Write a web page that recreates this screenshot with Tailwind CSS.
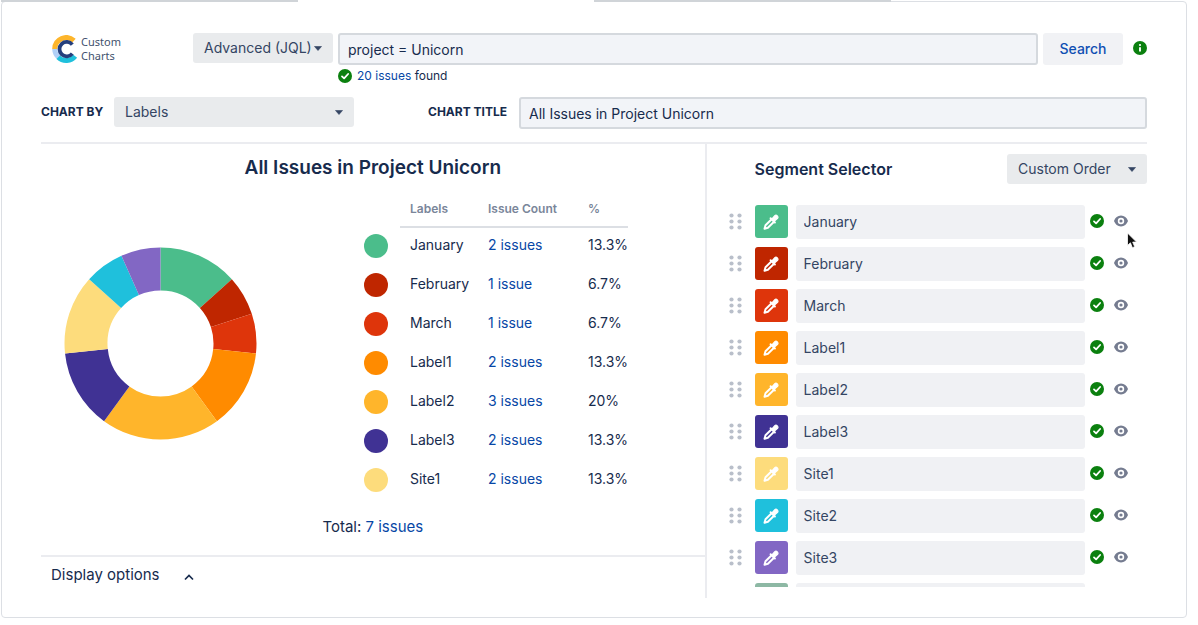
<!DOCTYPE html>
<html lang="en">
<head>
<meta charset="utf-8">
<title>Custom Charts</title>
<script src="https://cdn.jsdelivr.net/npm/@tailwindcss/browser@4"></script>
</head>
<body class="bg-white font-['Inter','Liberation_Sans',sans-serif] text-sm text-[#172b4d]">

<svg class="hidden" aria-hidden="true">
  <symbol id="check" viewBox="0 0 14 14"><circle cx="7" cy="7" r="7" fill="#0b800f"/><path d="M4 7.4 6.1 9.4 10.1 5" fill="none" stroke="#fff" stroke-width="1.8" stroke-linecap="round" stroke-linejoin="round"/></symbol>
  <symbol id="eye" viewBox="0 0 14 12"><path d="M7 .5C3.600.5 1.200 2.800.2 5.400a1.500 1.500 0 0 0 0 1.200C1.200 9.200 3.600 11.500 7 11.500S12.800 9.200 13.800 6.600a1.500 1.500 0 0 0 0-1.200C12.800 2.800 10.400.5 7 .5Z" fill="#757c90"/><circle cx="7" cy="6" r="2.400" fill="none" stroke="#fff" stroke-width="1.600"/></symbol>
  <symbol id="grip" viewBox="0 0 13 17"><g fill="#b9bfca"><circle cx="2.500" cy="2.500" r="2.100"/><circle cx="10.500" cy="2.500" r="2.100"/><circle cx="2.500" cy="8.500" r="2.100"/><circle cx="10.500" cy="8.500" r="2.100"/><circle cx="2.500" cy="14.500" r="2.100"/><circle cx="10.500" cy="14.500" r="2.100"/></g></symbol>
  <symbol id="dropper" viewBox="0 0 16 16"><path d="M8.600 5.200 2.500 11.300 1.500 14.700 4.900 13.800 11 7.700" fill="none" stroke="#fff" stroke-width="2" stroke-linecap="round" stroke-linejoin="round"/><path d="M7.600 4.200 11.900 8.500" stroke="#fff" stroke-width="2" stroke-linecap="round"/><path d="M9 5 11.600 1.800a1.900 1.900 0 0 1 2.700 2.700L11.200 7.200Z" fill="#fff" stroke="#fff" stroke-width="1.200" stroke-linejoin="round"/></symbol>
  <symbol id="caret" viewBox="0 0 8 5"><path d="M.5.500h7L4 4.500Z" fill="#344563" stroke="#344563" stroke-width=".6" stroke-linejoin="round"/></symbol>
</svg>

<main class="relative mt-px mr-[11px] ml-px rounded-[4px] border border-[#dcdfe4] pt-[31px] pr-[39px] pb-[19px] pl-[39px]">
  <div class="absolute -top-[2px] -left-px -right-px grid h-[3px] grid-cols-4" aria-hidden="true">
    <span class="mb-px bg-[#d0d4d8]"></span><span class="bg-white"></span><span class="mb-px bg-[#d0d4d8]"></span>
  </div>

  <header class="flex items-start">
    <div class="flex w-[152px] shrink-0 items-center gap-px pt-0.5 pl-[11px]">
      <svg class="size-7 shrink-0" viewBox="0 0 28 28" fill="none" aria-hidden="true">
        <path d="M2.700 14A11.500 11.500 0 0 1 22 5.700" stroke="#fdb52b" stroke-width="5"/>
        <path d="M2.700 14A11.500 11.500 0 0 0 6.700 22.400" stroke="#b1d0f7" stroke-width="5"/>
        <path d="M6.200 22.200A11.500 11.500 0 0 0 23.200 21.200" stroke="#1fc0dc" stroke-width="5"/>
        <path d="M20.300 9.600A7.200 7.200 0 1 0 20.300 18.600" stroke="#253f7d" stroke-width="3.800"/>
      </svg>
      <span class="font-['Noto_Sans','Open_Sans',sans-serif] text-[11px] leading-[14px] text-[#42526e]">Custom<br>Charts</span>
    </div>
    <button type="button" class="flex h-[30px] w-[140px] shrink-0 items-center justify-between rounded-[3px] bg-[#e9ebed] px-[11px] text-[#344563]">Advanced (JQL)<svg class="h-[5px] w-2" aria-hidden="true"><use href="#caret"/></svg></button>
    <div class="ml-[5px] min-w-0 flex-1">
      <input type="text" aria-label="JQL query" value="project = Unicorn" class="block h-8 w-full rounded-[3px] border-2 border-[#d5d9de] bg-[#f2f4f8] px-2">
      <p class="flex h-[22px] items-center gap-[5px] text-xs"><svg class="size-[14px]" aria-hidden="true"><use href="#check"/></svg><span><a href="#" class="text-[#0747a6]">20 issues</a> found</span></p>
    </div>
    <button type="button" class="ml-[5px] h-8 w-20 rounded-[3px] bg-[#f1f2f5] font-medium text-[#0f4fb3]">Search</button>
    <svg class="mt-2 ml-2.5 size-[14px]" viewBox="0 0 14 14" role="img" aria-label="Information"><circle cx="7" cy="7" r="7" fill="#0b800f"/><circle cx="7" cy="4" r="1.100" fill="#fff"/><path d="M7 6.300v4.200" stroke="#fff" stroke-width="1.900"/></svg>
  </header>

  <div class="mt-2.5 flex items-start">
    <span id="by" class="w-[73px] shrink-0 text-xs leading-[30px] font-bold">CHART BY</span>
    <button type="button" aria-labelledby="by" class="flex h-[30px] w-60 items-center justify-between rounded-[3px] bg-[#e9ebed] px-[11px] text-[#344563]">Labels<svg class="h-[5px] w-2" aria-hidden="true"><use href="#caret"/></svg></button>
    <label for="title" class="ml-[74px] w-[91px] shrink-0 text-xs leading-[30px] font-bold">CHART TITLE</label>
    <input id="title" type="text" value="All Issues in Project Unicorn" class="block h-8 min-w-0 flex-1 rounded-[3px] border-2 border-[#d5d9de] bg-[#f2f4f8] px-2">
  </div>

  <div class="mt-[13px] flex border-t-2 border-[#ebecf0]">
    <section class="w-[60%] pt-2.5">
      <h1 class="text-center text-[19px] leading-7 font-semibold">All Issues in Project Unicorn</h1>
      <div class="mt-[9px] flex items-start">
        <svg class="mt-[56px] ml-[23px] size-[193px] shrink-0" viewBox="0 0 193 193" role="img" aria-label="Issues by label">
          <g id="donut"></g>
        </svg>
        <table class="ml-[107px] text-left">
          <thead>
            <tr class="h-9 text-xs text-[#7a869a]">
              <td class="w-9"></td>
              <th class="w-[78px] border-b-2 border-[#dcdfe4] pl-2.5 font-semibold">Labels</th>
              <th class="w-[100px] border-b-2 border-[#dcdfe4] pl-2.5 font-semibold">Issue Count</th>
              <th class="w-[49px] border-b-2 border-[#dcdfe4] pl-2.5 font-semibold">%</th>
            </tr>
          </thead>
          <tbody id="legend"></tbody>
        </table>
      </div>
      <p class="mt-[13px] text-center text-[15px] leading-7">Total: <a href="#" class="text-[#0747a6]">7 issues</a></p>
      <div class="mt-3.5 border-t-2 border-[#ebecf0] pt-1.5 pl-2.5">
        <button type="button" aria-expanded="true" class="flex items-center gap-6 text-[15px] leading-6">Display options<svg class="mt-1 h-[7px] w-[10px]" viewBox="0 0 10 7" fill="none" aria-hidden="true"><path d="M1 5.500 5 1.500 9 5.500" stroke="#172b4d" stroke-width="1.700"/></svg></button>
      </div>
    </section>

    <section class="min-w-0 flex-1 border-l-2 border-[#ebecf0] pt-2.5 pb-[11px] pl-[22px]">
      <div class="flex items-center justify-between pl-[26px]">
        <h2 class="text-base font-semibold">Segment Selector</h2>
        <button type="button" class="flex h-[30px] w-[140px] items-center justify-between rounded-[3px] bg-[#e9ebed] px-[11px] text-[#344563]">Custom Order<svg class="h-[5px] w-2" aria-hidden="true"><use href="#caret"/></svg></button>
      </div>
      <ul id="segments" class="mt-[21px] flex h-[382px] flex-col gap-2 overflow-hidden pr-[19px]"></ul>
    </section>
  </div>

  <svg class="absolute top-[230px] right-[48px] h-[18px] w-3" viewBox="0 0 12 18" aria-hidden="true"><path d="M1.500 1v12.500l2.900-2.700 2 4.900 2.300-1-2-4.600h3.900Z" fill="#111" stroke="#fff" stroke-width=".8"/></svg>
</main>

<script>
  const segments = [
    ['January', '#4bbd8b', 2], ['February', '#bf2600', 1], ['March', '#de350b', 1],
    ['Label1', '#ff8b00', 2], ['Label2', '#ffb52b', 3], ['Label3', '#403294', 2],
    ['Site1', '#fddc7c', 2], ['Site2', '#1fc0dc', 1], ['Site3', '#8267c4', 1], ['Site4', '#8db8a4', 0]
  ];
  const total = 15;

  // Point on a ring of radius r, n issues clockwise from the top
  const point = (r, n) => {
    const a = n / total * 2 * Math.PI;
    return `${(96.5 + r * Math.sin(a)).toFixed(2)} ${(96.5 - r * Math.cos(a)).toFixed(2)}`;
  };
  let start = 0;
  document.getElementById('donut').innerHTML = segments.filter(s => s[2]).map(([, color, n]) => {
    const end = start + n;
    const slice = `<path fill="${color}" d="M${point(96, start)}A96 96 0 0 1 ${point(96, end)}L${point(53, end)}A53 53 0 0 0 ${point(53, start)}Z"/>`;
    start = end;
    return slice;
  }).join('');

  document.getElementById('legend').innerHTML = segments.slice(0, 7).map(([name, color, n]) => `
    <tr class="h-[39px]">
      <td class="pb-0.5"><span class="block size-6 rounded-full" style="background:${color}"></span></td>
      <td class="pb-1 pl-2.5">${name}</td>
      <td class="pb-1 pl-2.5"><a href="#" class="text-[#0747a6]">${n} issue${n > 1 ? 's' : ''}</a></td>
      <td class="pb-1 pl-2.5">${+(n / total * 100).toFixed(1)}%</td>
    </tr>`).join('');

  document.getElementById('segments').innerHTML = segments.map(([name, color]) => `
    <li class="flex h-[34px] shrink-0 items-start">
      <svg class="mt-2 h-[17px] w-[13px] shrink-0" aria-hidden="true"><use href="#grip"/></svg>
      <button type="button" aria-label="Pick colour for ${name}" class="ml-[13px] flex size-[33px] shrink-0 items-center justify-center rounded-[3px]" style="background:${color}"><svg class="size-4" aria-hidden="true"><use href="#dropper"/></svg></button>
      <input type="text" aria-label="Segment name" value="${name}" class="ml-2 h-[34px] min-w-0 flex-1 rounded-[3px] bg-[#f0f1f4] px-2 pb-0.5 text-[#344563]">
      <svg class="mt-[9px] ml-[5px] size-[14px] shrink-0" role="img" aria-label="Valid"><use href="#check"/></svg>
      <button type="button" aria-label="Hide ${name}" class="mt-2.5 ml-2.5 shrink-0"><svg class="block h-3 w-[14px]"><use href="#eye"/></svg></button>
    </li>`).join('');
</script>
</body>
</html>
